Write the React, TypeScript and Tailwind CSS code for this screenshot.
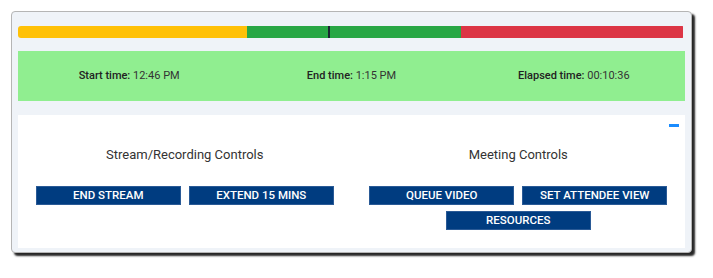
import React from 'react';

// progress segments across the meeting timeline
const segments = [
  { color: 'bg-[#ffc107]', width: 229 },
  { color: 'bg-[#28a745]', width: 214 },
  { color: 'bg-[#dc3545]', width: 222 },
];

function ControlButton({ label }: { label: string }) {
  return (
    <button className="w-[145px] h-[19px] bg-[#003c80] border border-[#2a5a96] text-white text-[11.5px] font-medium leading-none uppercase">
      {label}
    </button>
  );
}

function ControlGroup({ title, buttons }: { title: string; buttons: string[] }) {
  return (
    <div className="flex flex-col items-center px-[16px]">
      <h3 className="text-[13px] leading-5 text-[#333] font-normal">{title}</h3>
      <div className="mt-[21px] flex flex-wrap justify-center gap-x-2 gap-y-[6px]">
        {buttons.map((b) => (
          <ControlButton key={b} label={b} />
        ))}
      </div>
    </div>
  );
}

export default function App() {
  return (
    <div className="w-[713px] h-[278px] bg-white pt-[11px] pl-[11px]" style={{ fontFamily: 'Roboto, "Liberation Sans", sans-serif' }}>
      <div className="w-[681px] h-[242px] bg-[#eff3f8] border border-[#b5b5b5] rounded-[4px] shadow-[3px_3px_2px_rgba(0,0,0,0.85)] px-[6px] pt-[14px]">
        {/* timeline bar */}
        <div className="relative flex h-[12px] rounded-[3px] overflow-hidden">
          {segments.map((s, i) => (
            <div key={i} className={s.color} style={{ width: s.width }} />
          ))}
          <div className="absolute top-0 left-[310px] w-[2px] h-full bg-[#1b2633]" />
        </div>

        {/* times */}
        <div className="mt-[13px] h-[50px] bg-[#90ee90] grid grid-cols-3 items-center text-[11px] text-[#333]">
          <div className="text-center"><span className="font-medium text-[#222]">Start time:</span> 12:46 PM</div>
          <div className="text-center"><span className="font-medium text-[#222]">End time:</span> 1:15 PM</div>
          <div className="text-center"><span className="font-medium text-[#222]">Elapsed time:</span> 00:10:36</div>
        </div>

        {/* controls card */}
        <div className="relative mt-[14px] h-[133px] bg-white pt-[30px] grid grid-cols-2">
          <div className="absolute top-[9px] right-[6px] w-[10px] h-[3px] bg-[#1a8cff]" />
          <ControlGroup title="Stream/Recording Controls" buttons={['End Stream', 'Extend 15 Mins']} />
          <ControlGroup title="Meeting Controls" buttons={['Queue Video', 'Set Attendee View', 'Resources']} />
        </div>
      </div>
    </div>
  );
}
